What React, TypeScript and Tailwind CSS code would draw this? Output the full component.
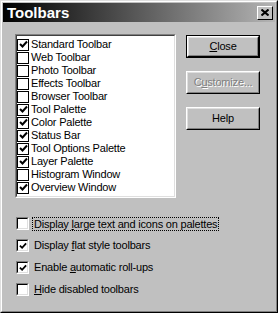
import React from "react";

const listItems: [string, boolean][] = [
  ["Standard Toolbar", true],
  ["Web Toolbar", false],
  ["Photo Toolbar", false],
  ["Effects Toolbar", false],
  ["Browser Toolbar", false],
  ["Tool Palette", true],
  ["Color Palette", true],
  ["Status Bar", true],
  ["Tool Options Palette", true],
  ["Layer Palette", true],
  ["Histogram Window", false],
  ["Overview Window", true],
];

function Check({ size = 9 }: { size?: number }) {
  return (
    <svg width={size} height={size} viewBox="0 0 9 9" className="block">
      <path d="M1 4 L3.5 6.5 L8 1.5" stroke="#000" strokeWidth="2" fill="none" />
    </svg>
  );
}

function ListBox() {
  return (
    <div className="w-[161px] h-[164px] border border-t-[#808080] border-l-[#808080] border-r-white border-b-white">
      <div className="h-full bg-white border border-t-[#404040] border-l-[#404040] border-r-[#dfdfdf] border-b-[#dfdfdf] pt-[2px]">
        {listItems.map(([label, on]) => (
          <div key={label} className="flex items-center h-[13px]">
            <div className="w-[12px] h-[12px] border border-black bg-white flex items-center justify-center">
              {on && <Check size={9} />}
            </div>
            <span className="ml-[2px] leading-none">{label}</span>
          </div>
        ))}
      </div>
    </div>
  );
}

function Button({
  children,
  isDefault,
  disabled,
}: {
  children: React.ReactNode;
  isDefault?: boolean;
  disabled?: boolean;
}) {
  const inner = (
    <div className="h-full border border-t-white border-l-white border-r-black border-b-black">
      <div className="h-full border border-t-[#dfdfdf] border-l-[#dfdfdf] border-r-[#808080] border-b-[#808080] flex items-center justify-center">
        <span
          className={
            disabled
              ? "text-[#808080] [text-shadow:1px_1px_0_#fff]"
              : "text-black"
          }
        >
          {children}
        </span>
      </div>
    </div>
  );
  return (
    <div className="w-[74px] h-[23px]">
      {isDefault ? (
        <div className="h-full border border-black">{inner}</div>
      ) : (
        inner
      )}
    </div>
  );
}

function Box3D({ on }: { on: boolean }) {
  return (
    <div className="w-[13px] h-[13px] border border-t-[#808080] border-l-[#808080] border-r-white border-b-white">
      <div className="h-full bg-white border border-t-black border-l-black border-r-[#dfdfdf] border-b-[#dfdfdf] flex items-center justify-center">
        {on && <Check size={8} />}
      </div>
    </div>
  );
}

const U = ({ children }: { children: React.ReactNode }) => (
  <span className="underline underline-offset-1">{children}</span>
);

export default function App() {
  return (
    <div
      className="w-[278px] h-[313px] bg-[#c0c0c0] border border-t-[#dfdfdf] border-l-[#dfdfdf] border-r-black border-b-black text-[11px] tracking-[-0.2px] text-black"
      style={{ fontFamily: '"Liberation Sans", Arial, sans-serif' }}
    >
      <div className="h-full border border-t-white border-l-white border-r-[#808080] border-b-[#808080] p-px flex flex-col">
        <div className="h-[19px] flex items-center justify-between pl-[4px] pr-[2px] bg-[linear-gradient(to_right,#000000,#b4b4b4)]">
          <span className="text-white font-bold text-[15px] tracking-normal leading-none">
            Toolbars
          </span>
          <div className="w-[16px] h-[14px] bg-[#c0c0c0] border border-t-white border-l-white border-r-black border-b-black flex items-center justify-center">
            <svg width="8" height="7" viewBox="0 0 8 7" className="block">
              <path d="M0.5 0.5 L7.5 6.5 M7.5 0.5 L0.5 6.5" stroke="#000" strokeWidth="2" />
            </svg>
          </div>
        </div>

        <div className="flex pl-[12px] pt-[12px]">
          <ListBox />
          <div className="ml-[10px] mt-[1px] flex flex-col gap-[13px]">
            <Button isDefault>
              <U>C</U>lose
            </Button>
            <Button disabled>
              C<U>u</U>stomize...
            </Button>
            <Button>Help</Button>
          </div>
        </div>

        <div className="flex flex-col gap-[9px] pl-[13px] mt-[19px]">
          <div className="flex items-center h-[13px]">
            <Box3D on={false} />
            <span className="ml-[3px] px-[1px] border border-dotted border-black leading-[12px]">
              Display <U>l</U>arge text and icons on palettes
            </span>
          </div>
          <div className="flex items-center h-[13px]">
            <Box3D on />
            <span className="ml-[5px]">
              Display <U>f</U>lat style toolbars
            </span>
          </div>
          <div className="flex items-center h-[13px]">
            <Box3D on />
            <span className="ml-[5px]">
              Enable <U>a</U>utomatic roll-ups
            </span>
          </div>
          <div className="flex items-center h-[13px]">
            <Box3D on={false} />
            <span className="ml-[5px]">
              <U>H</U>ide disabled toolbars
            </span>
          </div>
        </div>
      </div>
    </div>
  );
}
